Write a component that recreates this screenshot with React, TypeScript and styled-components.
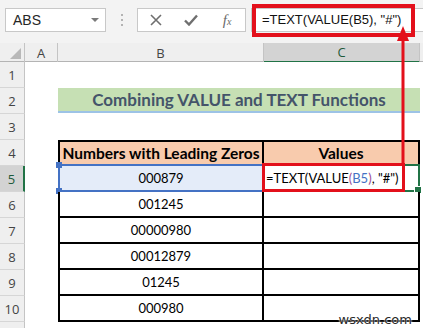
import styled, { createGlobalStyle } from "styled-components";

const GlobalStyle = createGlobalStyle`
  body {
    margin: 0;
    background: #fff;
  }
`;

const values = ["000879", "001245", "00000980", "00012879", "01245", "000980"];

const red = "#e3101b";

function Formula() {
  return (
    <>
      =TEXT(VALUE<Paren>(</Paren>
      <Ref>B5</Ref>
      <Paren>)</Paren>, "#")
    </>
  );
}

function App() {
  return (
    <>
      <GlobalStyle />
      <Window>
        <TopBar>
          <NameBox>
            ABS
            <Caret />
          </NameBox>
          <Grip>
            <i />
            <i />
            <i />
          </Grip>
          <ButtonGroup>
            <IconButton>
              <svg width="12" height="12" viewBox="0 0 12 12">
                <path d="M1 1 L11 11 M11 1 L1 11" stroke="#6f6f6f" strokeWidth="1.6" />
              </svg>
            </IconButton>
            <IconButton>
              <svg width="14" height="12" viewBox="0 0 14 12">
                <path d="M1 6.5 L5 10.5 L13 1.5" stroke="#6f6f6f" strokeWidth="2.4" fill="none" />
              </svg>
            </IconButton>
            <Fx>
              f<sub>x</sub>
            </Fx>
          </ButtonGroup>
          <FormulaInput>=TEXT(VALUE(B5), "#")</FormulaInput>
        </TopBar>

        <Sheet>
          <SheetRow $header>
            <Corner />
            <ColHeader>A</ColHeader>
            <ColHeader>B</ColHeader>
            <ColHeader $active>C</ColHeader>
          </SheetRow>

          <SheetRow>
            <RowHeader>1</RowHeader>
          </SheetRow>

          <SheetRow>
            <RowHeader>2</RowHeader>
            <span />
            <Title>Combining VALUE and TEXT Functions</Title>
          </SheetRow>

          <SheetRow>
            <RowHeader>3</RowHeader>
          </SheetRow>

          <SheetRow>
            <RowHeader>4</RowHeader>
            <span />
            <TableCell $head $first $top>
              Numbers with Leading Zeros
            </TableCell>
            <TableCell $head $top>
              Values
            </TableCell>
          </SheetRow>

          {values.map((v, i) => (
            <SheetRow key={v}>
              <RowHeader $active={i === 0}>{i + 5}</RowHeader>
              <span />
              <TableCell $first $picked={i === 0}>
                {v}
                {i === 0 && <RefFrame />}
              </TableCell>
              <TableCell>
                {i === 0 && (
                  <>
                    <EditText>
                      <Formula />
                    </EditText>
                    <ActiveFrame />
                  </>
                )}
              </TableCell>
            </SheetRow>
          ))}

          <SheetRow>
            <RowHeader />
          </SheetRow>
        </Sheet>

        <Mark $left={252} $top={4} $w={163} $h={33} $b={4} />
        <Mark $left={262} $top={163} $w={143} $h={29} $b={3} />
        <Arrow width="16" height="140" viewBox="0 0 16 140">
          <polygon points="8,0 14,15 2,15" fill={red} />
          <rect x="6.5" y="12" width="3" height="126" fill={red} />
        </Arrow>
        <Watermark>wsxdn.com</Watermark>
      </Window>
    </>
  );
}

export default App;

const Window = styled.div`
  position: relative;
  width: 423px;
  height: 328px;
  overflow: hidden;
  background: #fff;
  font-family: "Open Sans", "Liberation Sans", sans-serif;
`;

const TopBar = styled.div`
  display: flex;
  align-items: flex-start;
  height: 43px;
  box-sizing: border-box;
  padding: 8px 0 0 5px;
  background: #f3f3f3;
`;

const NameBox = styled.div`
  position: relative;
  width: 101px;
  height: 24px;
  box-sizing: border-box;
  border: 1px solid #c8c8c8;
  background: #fff;
  padding-left: 7px;
  font: 14px/22px "Liberation Sans", sans-serif;
  color: #262626;
`;

const Caret = styled.span`
  position: absolute;
  right: 6px;
  top: 9px;
  border-left: 4px solid transparent;
  border-right: 4px solid transparent;
  border-top: 4px solid #7a7a7a;
`;

const Grip = styled.div`
  width: 31px;
  height: 24px;
  display: flex;
  flex-direction: column;
  align-items: center;
  justify-content: center;
  gap: 3px;

  i {
    width: 2px;
    height: 2px;
    background: #b3b3b3;
  }
`;

const ButtonGroup = styled.div`
  width: 109px;
  height: 24px;
  box-sizing: border-box;
  border: 1px solid #c8c8c8;
  background: #fff;
  display: grid;
  grid-template-columns: 1fr 1fr 1fr;
  align-items: center;
  justify-items: center;
`;

const IconButton = styled.span`
  display: flex;
  align-items: center;
`;

const Fx = styled.span`
  font: italic 15px "Liberation Serif", serif;
  color: #6a6a6a;

  sub {
    font-size: 10px;
    vertical-align: baseline;
  }
`;

const FormulaInput = styled.div`
  flex: 1;
  margin-left: 5px;
  height: 24px;
  box-sizing: border-box;
  border: 1px solid #c8c8c8;
  border-right: none;
  background: #fff;
  padding-left: 10px;
  font: 13px/22px "Liberation Sans", sans-serif;
  color: #111;
  white-space: nowrap;
`;

const Sheet = styled.div`
  display: flex;
  flex-direction: column;
`;

const SheetRow = styled.div<{ $header?: boolean }>`
  display: grid;
  grid-template-columns: 25px 33px 206px 156px 1fr;
  height: ${(p) => (p.$header ? 19 : 26)}px;
  background: ${(p) => (p.$header ? "#efefef" : "#fff")};
  ${(p) => p.$header && "border-bottom: 1px solid #b4b4b4; box-sizing: border-box;"}
`;

const Corner = styled.div`
  position: relative;
  border-right: 1px solid #c4c4c4;

  &::after {
    content: "";
    position: absolute;
    right: 3px;
    bottom: 3px;
    border-left: 11px solid transparent;
    border-bottom: 11px solid #b8b8b8;
  }
`;

const ColHeader = styled.div<{ $active?: boolean }>`
  display: flex;
  align-items: center;
  justify-content: center;
  border-right: 1px solid #c4c4c4;
  box-sizing: border-box;
  font-size: 13px;
  color: ${(p) => (p.$active ? "#1f5a3a" : "#444")};
  background: ${(p) => (p.$active ? "#d3d3d3" : "transparent")};
  ${(p) => p.$active && "border-bottom: 2px solid #217346; margin-bottom: -1px;"}
`;

const RowHeader = styled.div<{ $active?: boolean }>`
  display: flex;
  align-items: center;
  justify-content: center;
  box-sizing: border-box;
  border-bottom: 1px solid #d6d6d6;
  border-right: ${(p) => (p.$active ? "2px solid #217346" : "1px solid #c4c4c4")};
  background: ${(p) => (p.$active ? "#d3d3d3" : "#efefef")};
  font-size: 13px;
  color: ${(p) => (p.$active ? "#1f5a3a" : "#444")};
`;

const Title = styled.div`
  grid-column: 3 / 5;
  display: flex;
  align-items: center;
  justify-content: center;
  background: #c6e0b4;
  border-bottom: 2px solid #9dc3e6;
  box-sizing: border-box;
  height: 25px;
  font: bold 17px "Lato", sans-serif;
  color: #44546a;
`;

const TableCell = styled.div<{
  $head?: boolean;
  $first?: boolean;
  $top?: boolean;
  $picked?: boolean;
}>`
  position: relative;
  display: flex;
  align-items: center;
  justify-content: center;
  box-sizing: border-box;
  border-right: 2px solid #000;
  border-bottom: 2px solid #000;
  ${(p) => p.$first && "border-left: 2px solid #000;"}
  ${(p) => p.$top && "border-top: 2px solid #000;"}
  background: ${(p) => (p.$head ? "#f8cbad" : p.$picked ? "#e4ecf9" : "#fff")};
  font: ${(p) => (p.$head ? "bold 15.5px" : "13px")} "Lato", sans-serif;
  color: #000;
`;

const RefFrame = styled.span`
  position: absolute;
  inset: -2px -2px -2px -2px;
  border: 2px solid #4472c4;

  &::before,
  &::after {
    content: "";
    position: absolute;
    left: -4px;
    width: 6px;
    height: 6px;
    background: #4472c4;
  }

  &::before {
    top: -4px;
  }

  &::after {
    bottom: -4px;
  }
`;

const ActiveFrame = styled.span`
  position: absolute;
  inset: -2px -2px -2px -2px;
  border: 2px solid #217346;

  &::after {
    content: "";
    position: absolute;
    right: -4px;
    bottom: -4px;
    width: 6px;
    height: 6px;
    background: #217346;
    border: 1px solid #fff;
  }
`;

const EditText = styled.span`
  position: absolute;
  left: 2px;
  top: 4px;
  font: 13px "Lato", sans-serif;
  white-space: nowrap;
  z-index: 1;
`;

const Paren = styled.span`
  color: #9b4f96;
`;

const Ref = styled.span`
  color: #4472c4;
`;

const Mark = styled.div<{ $left: number; $top: number; $w: number; $h: number; $b: number }>`
  position: absolute;
  left: ${(p) => p.$left}px;
  top: ${(p) => p.$top}px;
  width: ${(p) => p.$w}px;
  height: ${(p) => p.$h}px;
  box-sizing: border-box;
  border: ${(p) => p.$b}px solid ${red};
  z-index: 2;
`;

const Arrow = styled.svg`
  position: absolute;
  left: 395px;
  top: 26px;
  z-index: 3;
`;

const Watermark = styled.div`
  position: absolute;
  right: 11px;
  bottom: 1px;
  font: 13px "DejaVu Sans", sans-serif;
  color: #2a2a2a;
  text-shadow: 0 0 2px #fff, 0 0 2px #fff;
  z-index: 3;
`;
